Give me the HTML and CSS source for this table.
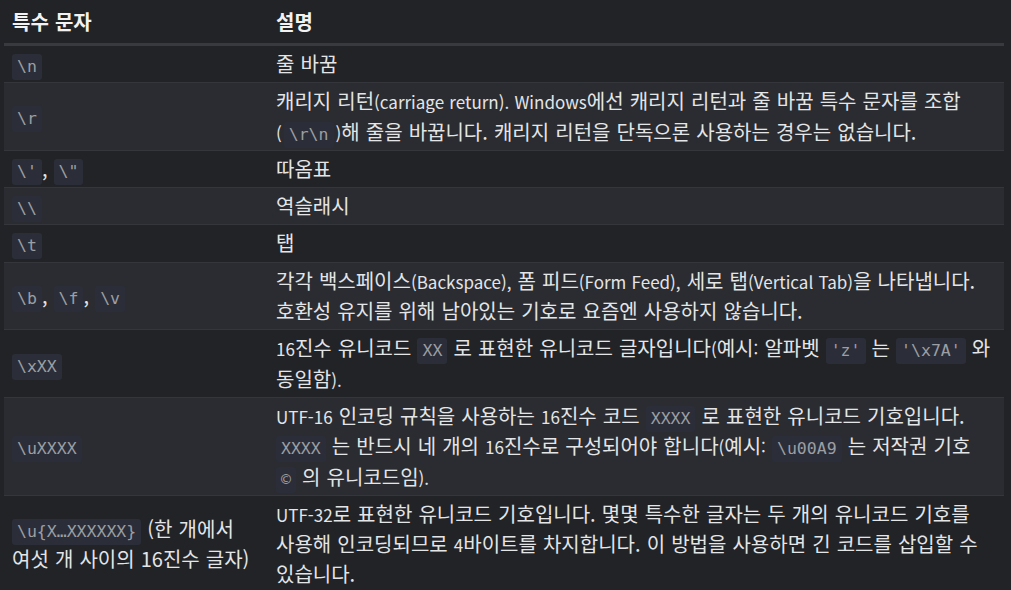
FILE: index.html
```html
<!DOCTYPE html>
<html lang="ko">
<head>
<meta charset="utf-8">
<link rel="stylesheet" href="styles.css">
</head>
<body>
<table class="chars">
  <thead>
    <tr><th class="c1">특수 문자</th><th>설명</th></tr>
  </thead>
  <tbody>
    <tr><td><code>\n</code></td><td>줄 바꿈</td></tr>
    <tr><td><code>\r</code></td><td>캐리지 리턴<span class="en">(carriage return). Windows</span>에선 캐리지 리턴과 줄 바꿈 특수 문자를 조합 <span class="en">(</span><code class="gap">\r\n</code><span class="en">)</span>해 줄을 바꿉니다. 캐리지 리턴을 단독으론 사용하는 경우는 없습니다.</td></tr>
    <tr><td><code>\'</code>, <code>\"</code></td><td>따옴표</td></tr>
    <tr><td><code>\\</code></td><td>역슬래시</td></tr>
    <tr><td><code>\t</code></td><td>탭</td></tr>
    <tr><td><code>\b</code>, <code>\f</code>, <code>\v</code></td><td>각각 백스페이스<span class="en">(Backspace),</span> 폼 피드<span class="en">(Form Feed),</span> 세로 탭<span class="en">(Vertical Tab)</span>을 나타냅니다. 호환성 유지를 위해 남아있는 기호로 요즘엔 사용하지 않습니다.</td></tr>
    <tr><td><code>\xXX</code></td><td><span class="en">16</span>진수 유니코드 <code>XX</code> 로 표현한 유니코드 글자입니다<span class="en">(</span>예시<span class="en">:</span> 알파벳 <code>'z'</code> 는 <code>'\x7A'</code> 와 동일함<span class="en">).</span></td></tr>
    <tr><td><code>\uXXXX</code></td><td><span class="en">UTF-16</span> 인코딩 규칙을 사용하는 <span class="en">16</span>진수 코드 <code>XXXX</code> 로 표현한 유니코드 기호입니다. <code>XXXX</code> 는 반드시 네 개의 <span class="en">16</span>진수로 구성되어야 합니다<span class="en">(</span>예시<span class="en">:</span> <code>\u00A9</code> 는 저작권 기호 <code>©</code> 의 유니코드임<span class="en">).</span></td></tr>
    <tr><td><code>\u{X…XXXXXX}</code> (한 개에서 여섯 개 사이의 16진수 글자)</td><td><span class="en">UTF-32</span>로 표현한 유니코드 기호입니다. 몇몇 특수한 글자는 두 개의 유니코드 기호를 사용해 인코딩되므로 <span class="en">4</span>바이트를 차지합니다. 이 방법을 사용하면 긴 코드를 삽입할 수 있습니다.</td></tr>
  </tbody>
</table>
</body>
</html>
```

FILE: styles.css
```css
html, body {
  margin: 0;
  padding: 0;
  background: #212327;
}

body {
  padding: 0 7px 0 4px;
  font-family: "Noto Sans CJK KR", "Noto Sans", sans-serif;
  font-size: 20px;
  line-height: 30.3px;
  color: #e4e5e7;
  word-break: keep-all;
  word-spacing: 0.5px;
}

.chars {
  width: 1000px;
  border-collapse: collapse;
  table-layout: fixed;
}

.chars th {
  text-align: left;
  font-weight: 700;
  line-height: 30px;
  color: #f2f2f2;
  padding: 7px 8px 6px;
  border-bottom: 3px solid #383a40;
}

.chars th.c1 {
  width: 248px;
}

.chars td {
  padding: 3px 8px 3px;
  vertical-align: middle;
  border-bottom: 1px solid #34363c;
}

.chars tbody tr:nth-child(even) td {
  background: #2a2c31;
}

.en {
  font-size: 17px;
  line-height: 20px;
}

code {
  font-family: "DejaVu Sans Mono", monospace;
  font-size: 16.5px;
  line-height: 20px;
  word-spacing: 0;
  color: #9c9ea3;
  background: #2b2e38;
  padding: 3px 5px 4px;
  border-radius: 3px;
}

code.gap {
  margin: 0 2px;
}
```
